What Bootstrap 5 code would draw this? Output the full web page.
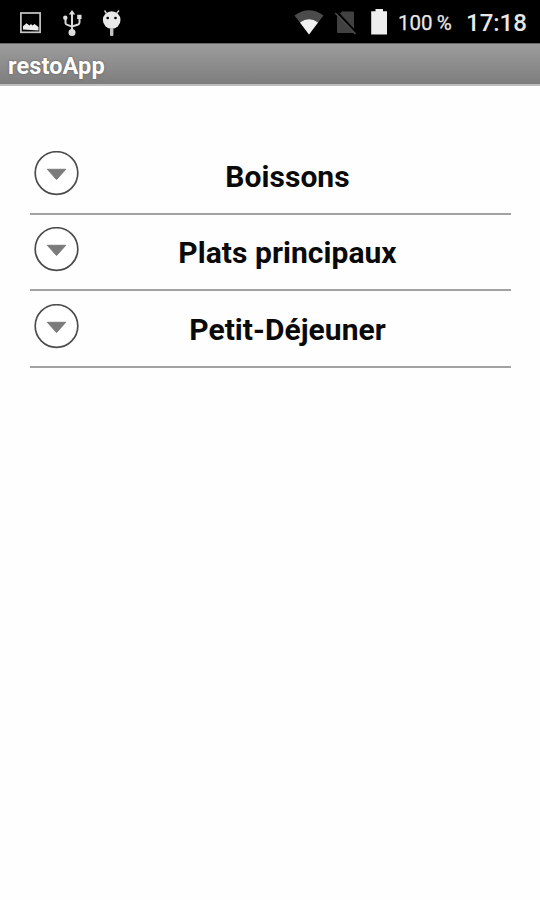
<!DOCTYPE html>
<html lang="fr">
<head>
<meta charset="utf-8">
<meta name="viewport" content="width=device-width, initial-scale=1">
<title>restoApp</title>
<link href="https://cdn.jsdelivr.net/npm/bootstrap@5.3.0/dist/css/bootstrap.min.css" rel="stylesheet">
<style>
  body { font-family: Roboto, "Liberation Sans", sans-serif; background: #fefefe; min-height: 900px; }
  .status-bar { height: 43px; background: #000; color: #e8e8e8; line-height: 43px; }
  .status-bar svg { display: block; flex: none; }
  .status-bar .notifications { padding-left: 18px; gap: 14px; }
  .status-bar .indicators { padding-right: 14px; }
  .battery-level { font-size: 20.5px; width: 53px; margin-left: 10px; margin-right: 15px; padding-top: 3px; word-spacing: -1px; -webkit-text-stroke: .25px #e8e8e8; }
  .clock { font-size: 24px; width: 60px; padding-top: 3px; font-weight: 500; }
  .title-bar { height: 43px; padding: 0 7px 0 8px; background: linear-gradient(#9d9d9d, #7d7d7d); border-top: 1px solid #686868; border-bottom: 2px solid #bdbdbd; }
  .title-bar h1 { font-size: 23.5px; line-height: 42px; padding-top: 1px; font-weight: 700; letter-spacing: .1px; color: #fff; text-shadow: 0 0 2px #555; }
  .menu-list { margin: 52px 29px 0 30px; }
  .menu-row { height: 77px; border-bottom: 2px solid #a2a2a2; padding: 13px 0 0 4px; }
  .menu-row:nth-child(even) { height: 76px; padding-top: 12px; }
  .menu-row svg { display: block; flex: none; }
  .menu-label { font-size: 30px; line-height: 36px; font-weight: 700; letter-spacing: .05px; color: #0a0a0a; padding-top: 8px; padding-right: 16px; }
</style>
</head>
<body>
<header class="status-bar d-flex justify-content-between">
  <div class="notifications d-flex align-items-center">
    <svg width="26" height="42" viewBox="0 0 26 42">
      <rect x="2.900" y="12" width="19.200" height="19.300" fill="none" stroke="#c8c8c8" stroke-width="1.700"/>
      <path d="M5 28.500v-3.300l3.500-3 3 2.300 1.500-1.500 1.500 1.500 2-1.500 4 3v3.500z" fill="#eee"/>
    </svg>
    <svg width="26" height="42" viewBox="0 0 26 42">
      <g fill="none" stroke="#d8d8d8" stroke-width="2"><path d="M14 12v18M7.500 17v5q0 1.200 1.300 1.600l5.200 2M21.500 16v5.500q0 1.500-1.300 2l-6.200 2"/></g>
      <g fill="#dedede"><circle cx="14" cy="31.500" r="3.500"/><circle cx="7.300" cy="16.700" r="2.200"/><path d="M19.200 13.700h4.300v4.300h-4.300zM10.800 13.500l3.200-4.500 3.200 4.500z"/></g>
    </svg>
    <svg width="26" height="42" viewBox="0 0 26 42">
      <g fill="#e8e8e8"><circle cx="13.700" cy="19" r="8.800"/><rect x="12" y="27" width="3.400" height="8" rx="1" fill="#c4c4c4"/></g>
      <path d="M8.500 12.500L6.500 9.500M18.500 12.500L21 9.500" stroke="#ccc" stroke-width="1.500"/>
      <circle cx="9.700" cy="17" r="1.300"/><circle cx="17.500" cy="17" r="1.300"/>
    </svg>
  </div>
  <div class="indicators d-flex align-items-center">
    <svg width="94" height="42" viewBox="294 0 94 42">
      <path d="M294.500 14.500Q309 4 323.500 14.500L309 33.500z" fill="#4b4b4b"/>
      <path d="M300 21.500Q309 15 318 21.500L309 33.500z" fill="#f0f0f0"/>
      <path d="M342 10.500h11q1 0 1 1v20.500h-16q-1 0-1-1v-15.500z" fill="#414141"/>
      <path d="M336.500 10.500L356.500 32" stroke="#000" stroke-width="2.400"/>
      <path d="M335.300 12L355.500 33" stroke="#4b4b4b" stroke-width="1.700"/>
      <path d="M375.500 8h7.500v2.200h4v23.300h-15.800V10.200h4.300z" fill="#eee"/>
    </svg>
    <span class="battery-level text-nowrap">100&#8201;%</span>
    <span class="clock text-nowrap">17:18</span>
  </div>
</header>
<div class="title-bar"><h1 class="m-0">restoApp</h1></div>
<main>
  <ul class="menu-list list-unstyled">
    <li class="menu-row d-flex">
      <svg width="46" height="46" viewBox="0 0 46 46"><circle cx="22.500" cy="22" r="21.300" fill="#fff" stroke="#4c4c4c" stroke-width="1.700"/><path d="M13.300 18.300h18.500l-9.250 10.200z" fill="#7b7b7b" stroke="#7b7b7b" stroke-linejoin="round"/></svg>
      <span class="menu-label flex-grow-1 text-center">Boissons</span>
    </li>
    <li class="menu-row d-flex">
      <svg width="46" height="46" viewBox="0 0 46 46"><circle cx="22.500" cy="22" r="21.300" fill="#fff" stroke="#4c4c4c" stroke-width="1.700"/><path d="M13.300 18.300h18.500l-9.250 10.200z" fill="#7b7b7b" stroke="#7b7b7b" stroke-linejoin="round"/></svg>
      <span class="menu-label flex-grow-1 text-center">Plats principaux</span>
    </li>
    <li class="menu-row d-flex">
      <svg width="46" height="46" viewBox="0 0 46 46"><circle cx="22.500" cy="22" r="21.300" fill="#fff" stroke="#4c4c4c" stroke-width="1.700"/><path d="M13.300 18.300h18.500l-9.250 10.200z" fill="#7b7b7b" stroke="#7b7b7b" stroke-linejoin="round"/></svg>
      <span class="menu-label flex-grow-1 text-center">Petit-Déjeuner</span>
    </li>
  </ul>
</main>
<script src="https://cdn.jsdelivr.net/npm/bootstrap@5.3.0/dist/js/bootstrap.bundle.min.js"></script>
</body>
</html>
